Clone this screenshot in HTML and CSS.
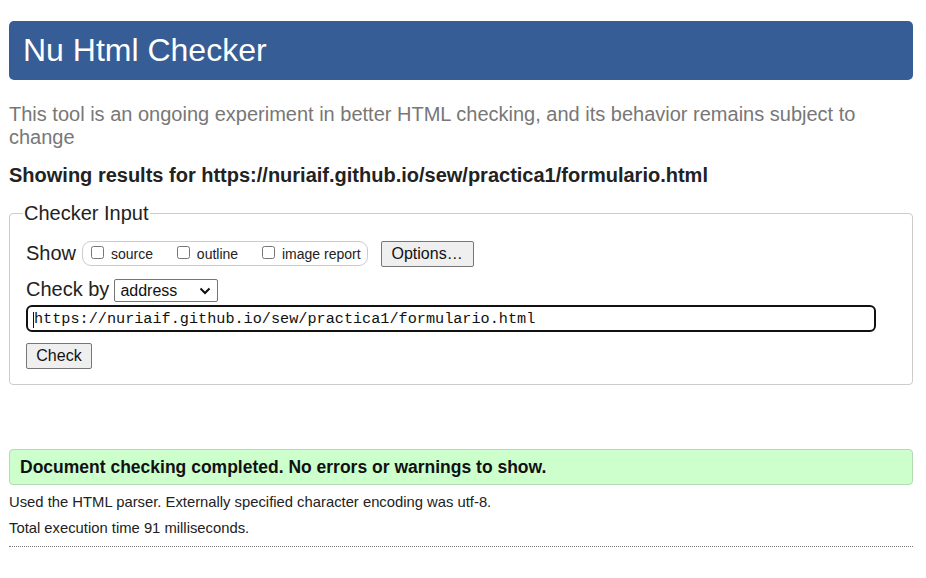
FILE: index.html
```html
<!DOCTYPE html>
<html lang="en">
<head>
<meta charset="utf-8">
<title>Showing results for https://nuriaif.github.io/sew/practica1/formulario.html - Nu Html Checker</title>
<link rel="stylesheet" href="styles.css">
</head>
<body>
<h1 class="title">Nu Html Checker</h1>
<p class="intro">This tool is an ongoing experiment in better HTML checking, and its behavior remains subject to change</p>
<p class="showing">Showing results for https://nuriaif.github.io/sew/practica1/formulario.html</p>
<form class="checker">
  <fieldset class="input-set">
    <legend class="legend">Checker Input</legend>
    <div class="row row-show">
      <span class="row-label">Show</span>
      <span class="show-group">
        <label class="opt opt-gap"><input type="checkbox" class="cb"> source</label><label class="opt opt-gap"><input type="checkbox" class="cb"> outline</label><label class="opt"><input type="checkbox" class="cb"> image report</label>
      </span>
      <button type="button" class="btn btn-options">Options…</button>
    </div>
    <div class="row row-by">
      <span class="row-label label-by">Check by</span>
      <span class="select-wrap">
        <select class="select"><option>address</option></select>
        <svg class="chev" width="12" height="8" viewBox="0 0 12 8" aria-hidden="true"><path d="M1.5 1.5 L6 6 L10.5 1.5" fill="none" stroke="#111" stroke-width="2"/></svg>
      </span>
    </div>
    <div class="row row-url">
      <span class="url-wrap">
        <input type="url" class="url" value="https://nuriaif.github.io/sew/practica1/formulario.html">
        <span class="caret"></span>
      </span>
    </div>
    <div class="row row-submit">
      <button type="button" class="btn btn-check">Check</button>
    </div>
  </fieldset>
</form>
<div class="success">Document checking completed. No errors or warnings to show.</div>
<p class="details">Used the HTML parser. Externally specified character encoding was utf-8.</p>
<p class="details details-second">Total execution time 91 milliseconds.</p>
<hr class="rule">
</body>
</html>
```
FILE: styles.css
```css
html, body {
  background: #fff;
}
body {
  margin: 0;
  padding: 21px 13px 0 9px;
  font-family: "Liberation Sans", Arial, sans-serif;
  color: #111;
}
.title {
  margin: 0;
  height: 59px;
  line-height: 59px;
  padding: 0 14px;
  font-size: 32px;
  font-weight: normal;
  color: #fff;
  background: #365d95;
  border-radius: 5px;
}
.intro {
  margin: 22.6px 0 0;
  font-size: 20px;
  line-height: 23px;
  color: #777;
}
.showing {
  margin: 15.3px 0 0;
  font-size: 20px;
  line-height: 23px;
  font-weight: bold;
  color: #222;
}
.checker {
  margin: 14.7px 0 0;
}
.input-set {
  margin: 0;
  padding: 16.4px 16px 15px 16px;
  border: 1px solid #ccc;
  border-radius: 4px;
  min-width: 0;
}
.legend {
  padding: 0 1px;
  margin-left: -3px;
  font-size: 20px;
  line-height: 23px;
  color: #222;
}
.row {
  display: flex;
  align-items: flex-start;
}
.row-label {
  font-size: 20px;
  line-height: 22px;
  color: #222;
}
.row-show .row-label {
  margin-top: 1px;
}
.show-group {
  margin-left: 6px;
  height: 23px;
  line-height: 24px;
  padding: 0 6px 0 4px;
  border: 1px solid #ccc;
  border-radius: 9px;
  font-size: 14px;
  white-space: nowrap;
}
.opt {
  color: #222;
}
.opt-gap {
  margin-right: 20px;
}
.cb {
  width: 13px;
  height: 13px;
  margin: 3px 3px 3px 4px;
  vertical-align: baseline;
}
.btn {
  box-sizing: border-box;
  font-family: "Liberation Sans", Arial, sans-serif;
  font-size: 16px;
  color: #111;
  background: #efefef;
  border: 1px solid #767676;
  border-radius: 2px;
  height: 26px;
  line-height: 20px;
  padding: 1px 0 0;
}
.btn-options {
  margin-left: 13px;
  width: 93px;
}
.row-by {
  margin-top: 12px;
}
.label-by {
  margin-top: -1px;
  margin-right: 5px;
}
.select-wrap {
  position: relative;
  display: inline-block;
}
.select {
  -webkit-appearance: none;
  appearance: none;
  box-sizing: border-box;
  width: 104px;
  height: 23px;
  margin: 0;
  padding: 0 0 0 5px;
  font-family: "Liberation Sans", Arial, sans-serif;
  font-size: 16px;
  color: #111;
  background: #fff;
  border: 1px solid #767676;
  border-radius: 2px;
}
.chev {
  position: absolute;
  right: 7px;
  top: 8px;
  pointer-events: none;
}
.row-url {
  margin-top: 3px;
}
.url-wrap {
  position: relative;
  display: inline-block;
}
.url {
  box-sizing: border-box;
  width: 850px;
  height: 27px;
  margin: 0;
  padding: 2px 0 0 6px;
  border: 2px solid #111;
  border-radius: 6px;
  font-family: "Liberation Mono", "DejaVu Sans Mono", monospace;
  font-size: 15.2px;
  color: #111;
  background: #fff;
  outline: none;
}
.caret {
  position: absolute;
  left: 7px;
  top: 7px;
  width: 1px;
  height: 16px;
  background: #111;
}
.row-submit {
  margin-top: 11px;
}
.btn-check {
  width: 66px;
}
.success {
  margin-top: 64px;
  box-sizing: border-box;
  height: 36px;
  line-height: 34px;
  padding: 0 10px;
  border: 1px solid #b4dab4;
  border-radius: 4px;
  background: #ccffcc;
  font-size: 17.5px;
  font-weight: bold;
  color: #111;
}
.details {
  margin: 9.5px 0 0;
  font-size: 14.8px;
  line-height: 17px;
  color: #222;
}
.details-second {
  margin-top: 9px;
}
.rule {
  margin: 8.5px 0 0;
  height: 0;
  border: 0;
  border-top: 1px dotted #777;
}
```
